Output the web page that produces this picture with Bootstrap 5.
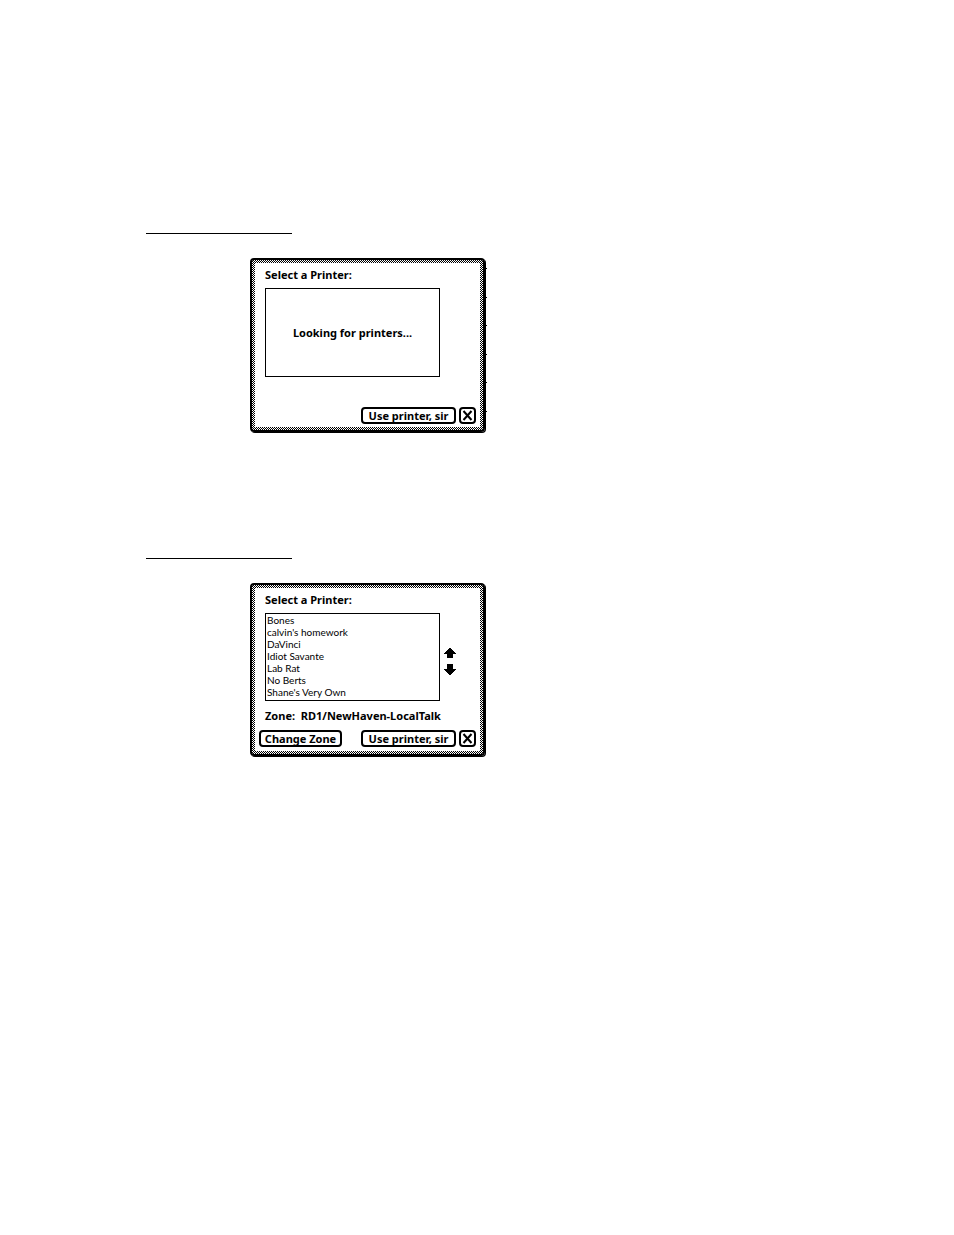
<!DOCTYPE html>
<html lang="en">
<head>
<meta charset="utf-8">
<meta name="viewport" content="width=device-width, initial-scale=1">
<title>Select a Printer</title>
<link href="https://cdn.jsdelivr.net/npm/bootstrap@5.3.0/dist/css/bootstrap.min.css" rel="stylesheet">
<style>
  body { background: #fff; color: #000; font: 400 10px/12px Lato, "Open Sans", sans-serif; }
  .page { padding: 233px 24px 0 146px; }
  .rule { width: 146px; height: 1px; margin: 0; border: 0; background: #000; opacity: 1; }
  .step { height: 325px; }
  .frame {
    width: 235px; margin: 24px 0 0 104px; padding: 3px;
    border: 2px solid #000; border-radius: 4px; box-shadow: 1px 1px #000;
    background: repeating-conic-gradient(#000 0 25%, #fff 0 50%) 0 0 / 2px 2px;
  }
  .ticks {
    width: 1px; height: 146px; margin: 34px 0 0 1px;
    background: repeating-linear-gradient(#000 0 1px, transparent 1px 29px, #000 29px 30px, transparent 30px 57px);
  }
  .pane { height: 164px; background: #fff; padding: 5px 4px 3px 10px; }
  .pane.listed { height: 163px; padding-bottom: 4px; }
  .strong, .push { font: 700 11px/14px "Noto Sans", "Open Sans", sans-serif; margin: 0; }
  .listing {
    width: 175px; height: 88px; border: 1px solid #000; border-radius: 0; background: #fff;
    color: #000; padding: 0; overflow: hidden; outline: 0; display: block;
  }
  .waiting { height: 89px; }
  select.listing { font: inherit; }
  .listing option { padding: 0 1px; height: 12px; min-height: 12px; line-height: 12px; }
  .push {
    height: 17px; padding: 0; border: 2px solid #000; border-radius: 4px; background: #fff; color: #000;
    display: flex; align-items: center; justify-content: center;
  }
  .use { width: 95px; }
  .zone { width: 83px; }
  .close-box { width: 17px; }
  .arrow { padding: 0; border: 0; background: none; height: 11px; width: 12px; display: block; }
  .arrow svg, .close-box svg { display: block; }
  .arrows { gap: 5px; margin: 8px 0 0 4px; }
  .below { margin-top: 6px; }
  .buttons { margin-left: -6px; gap: 3px; }
</style>
</head>
<body>
<main class="page">
  <section class="step">
    <hr class="rule">
    <div class="d-flex align-items-start">
      <div class="frame">
        <div class="pane d-flex flex-column">
          <h2 class="strong">Select a Printer:</h2>
          <div class="below">
            <div class="listing waiting strong d-flex align-items-center justify-content-center" role="status">Looking for printers...</div>
          </div>
          <div class="buttons d-flex mt-auto">
            <button type="button" class="push use ms-auto">Use printer, sir</button>
            <button type="button" class="push close-box" aria-label="Close"><svg width="11" height="11" viewBox="0 0 11 11"><path d="M1.5 1l8 9m0-9l-8 9" stroke="#000" stroke-width="2"/></svg></button>
          </div>
        </div>
      </div>
      <div class="ticks"></div>
    </div>
  </section>
  <section class="step">
    <hr class="rule">
    <div class="frame">
      <div class="pane listed d-flex flex-column">
        <label class="strong" for="printers">Select a Printer:</label>
        <div class="below d-flex align-items-center">
          <select class="listing" id="printers" size="7">
            <option>Bones</option>
            <option>calvin's homework</option>
            <option>DaVinci</option>
            <option>Idiot Savante</option>
            <option>Lab Rat</option>
            <option>No Berts</option>
            <option>Shane's Very Own</option>
          </select>
          <div class="arrows d-flex flex-column">
            <button type="button" class="arrow" aria-label="Scroll up"><svg width="12" height="11" viewBox="0 0 12 11" shape-rendering="crispEdges"><path d="M5 0h2v1h1v1h1v1h1v1h1v1h1v1H9v4H3V6H0V5h1V4h1V3h1V2h1V1h1z"/></svg></button>
            <button type="button" class="arrow" aria-label="Scroll down"><svg width="12" height="11" viewBox="0 0 12 11" shape-rendering="crispEdges"><path d="M5 11h2v-1h1V9h1V8h1V7h1V6h1V5H9V0H3v5H0v1h1v1h1v1h1v1h1v1h1z"/></svg></button>
          </div>
        </div>
        <p class="strong mt-2">Zone:&nbsp; RD1/NewHaven-LocalTalk</p>
        <div class="buttons d-flex mt-auto">
          <button type="button" class="push zone">Change Zone</button>
          <button type="button" class="push use ms-auto">Use printer, sir</button>
          <button type="button" class="push close-box" aria-label="Close"><svg width="11" height="11" viewBox="0 0 11 11"><path d="M1.5 1l8 9m0-9l-8 9" stroke="#000" stroke-width="2"/></svg></button>
        </div>
      </div>
    </div>
  </section>
</main>
<script src="https://cdn.jsdelivr.net/npm/bootstrap@5.3.0/dist/js/bootstrap.bundle.min.js"></script>
</body>
</html>
